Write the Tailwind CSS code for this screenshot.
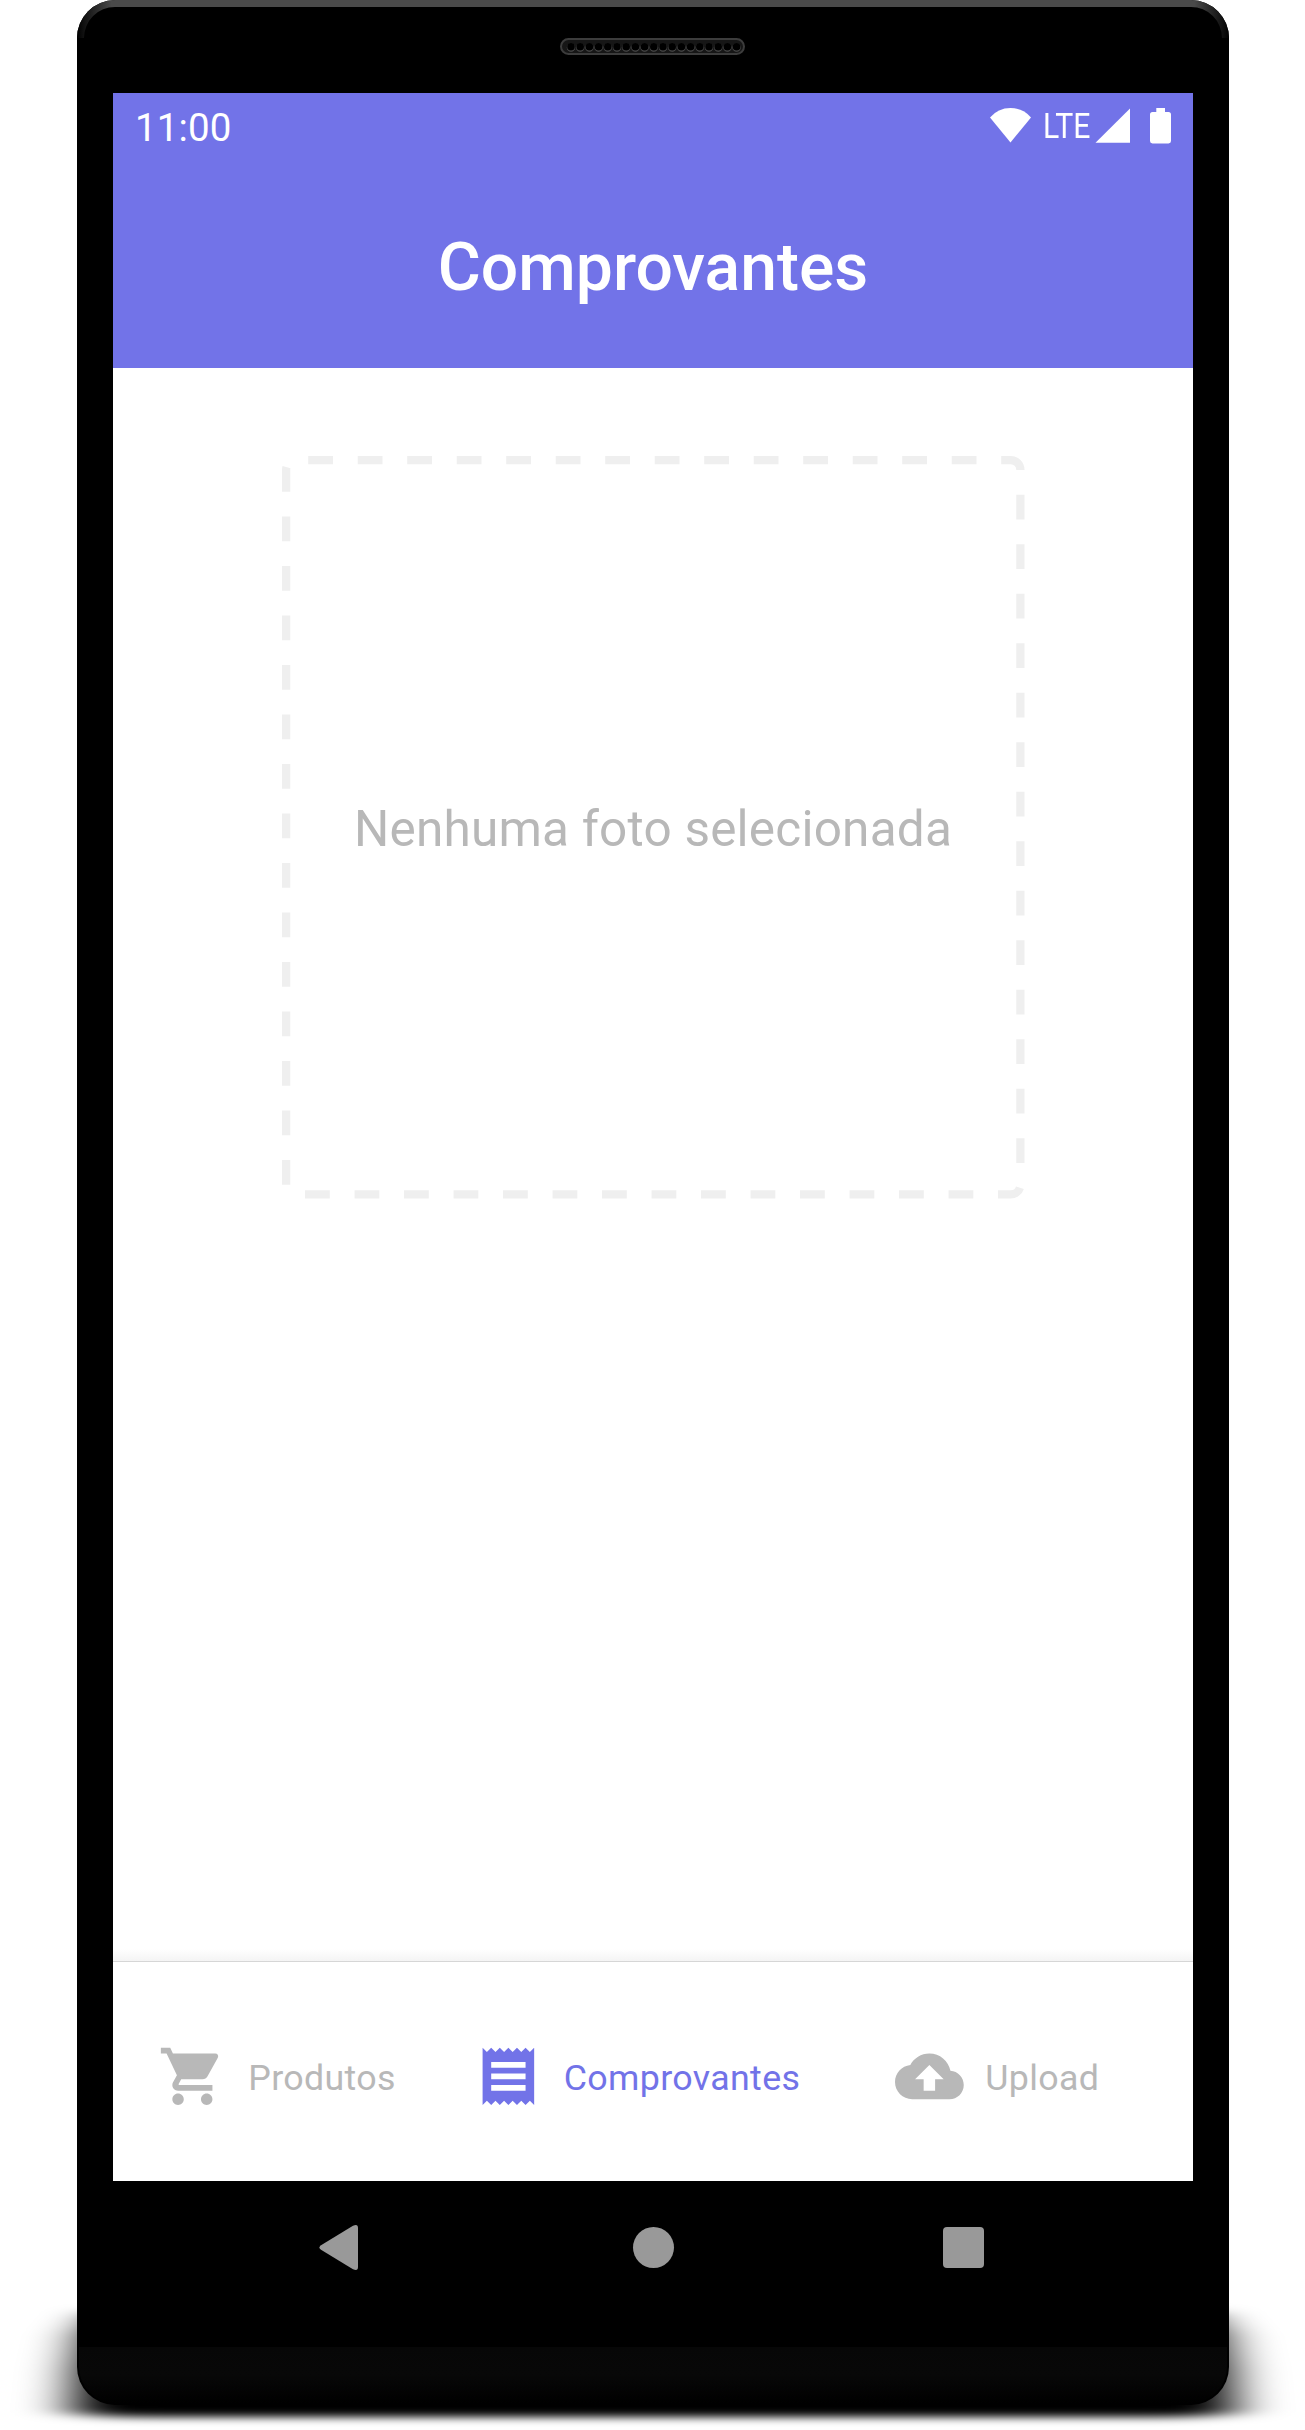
<!DOCTYPE html>
<html lang="pt-BR">
<head>
<meta charset="utf-8">
<title>Comprovantes</title>
<script src="https://cdn.jsdelivr.net/npm/@tailwindcss/browser@4"></script>
</head>
<body class="bg-white font-['Roboto',sans-serif]">
<div class="relative h-[2430px] w-[1305px] overflow-hidden pr-[76px] pl-[77px]">
  <!-- device frame -->
  <svg class="absolute inset-0" width="1305" height="2430" viewBox="0 0 1305 2430">
    <defs>
      <filter id="soft" x="-100" y="2200" width="1500" height="300" filterUnits="userSpaceOnUse"><feGaussianBlur stdDeviation="26 4.500"/></filter>
      <linearGradient id="edge" gradientUnits="userSpaceOnUse" x1="77" y1="0" x2="1229" y2="0">
        <stop offset="0" stop-color="#000"/><stop offset=".006" stop-color="#111"/><stop offset=".03" stop-color="#4a4a4a"/>
        <stop offset=".97" stop-color="#4a4a4a"/><stop offset=".994" stop-color="#111"/><stop offset="1" stop-color="#000"/>
      </linearGradient>
      <linearGradient id="base" x1="0" y1="0" x2="0" y2="1">
        <stop offset="0" stop-color="#070707"/><stop offset=".5" stop-color="#080808"/><stop offset="1" stop-color="#000"/>
      </linearGradient>
    </defs>
    <path filter="url(#soft)" d="M104 2312L84 2335L76 2370L72 2412Q72 2414 120 2417H1186Q1234 2414 1234 2412L1230 2370L1222 2335L1202 2312Z"/>
    <rect x="77" y="0" width="1152" height="2405" rx="38"/>
    <path fill="url(#edge)" d="M77 38A38 38 0 0 1 115 0H1191A38 38 0 0 1 1229 38H1222A31 31 0 0 0 1191 7H115A31 31 0 0 0 84 38Z"/>
    <path fill="url(#base)" d="M79 2347H1227V2367A36 36 0 0 1 1191 2403H115A36 36 0 0 1 79 2367Z"/>
    <rect x="561" y="39" width="183" height="15" rx="7.5" fill="#161616" stroke="#3c3c3c" stroke-width="2"/>
    <path d="M571 47.5H738" stroke="#4a4a4a" stroke-width="8.5" stroke-linecap="round" stroke-dasharray="0 9.2"/>
    <path d="M571 46.7H738" stroke="#000" stroke-width="7.6" stroke-linecap="round" stroke-dasharray="0 9.2"/>
  </svg>

  <div class="relative flex h-[2405px] flex-col px-9 pt-[93px]">
    <header class="h-[275px] bg-[#7273e8] text-white">
      <div class="flex h-[66px] items-center justify-between pr-[22px] pl-[22px]">
        <span class="pt-[5px] text-[38.5px] leading-none tracking-[.1px]">11:00</span>
        <div class="flex h-full items-center">
          <svg class="mr-[12px]" width="41" height="66" viewBox="990 93 41 66" fill="#fff"><path d="M990 117.5Q998 108 1010.500 108T1031 117.500L1010.500 142.500Z"/></svg>
          <span class="w-[52px] origin-left scale-x-[.87] text-[34.7px] leading-none">LTE</span>
          <svg width="76" height="66" viewBox="1095 93 76 66" fill="#fff"><path d="M1095.500 142.700H1130V108.500Z"/><path d="M1156.300 108H1165V112H1168.500Q1171 112 1171 114.500V141Q1171 143.400 1168.500 143.400H1152.500Q1150 143.400 1150 141V114.500Q1150 112 1152.500 112H1156.300Z"/></svg>
        </div>
      </div>
      <h1 class="flex h-[209px] items-center justify-center pt-2 text-[66px] leading-none font-medium">Comprovantes</h1>
    </header>

    <main class="flex h-[1593px] flex-col items-center bg-white pt-[88px]">
      <div class="relative flex h-[742.5px] w-[742.5px] items-center justify-center">
        <svg class="absolute inset-0" width="743" height="743" viewBox="282 456 743 743" fill="none" stroke="#efefef" stroke-width="8.25" stroke-dasharray="24.75">
          <path d="M286.125 1184.750V469.750A9.625 9.625 0 0 1 295.750 460.125H1010.750A9.625 9.625 0 0 1 1020.375 469.750V1184.750A9.625 9.625 0 0 1 1010.750 1194.375H295.750A9.625 9.625 0 0 1 286.125 1184.750"/>
        </svg>
        <p class="pt-[3px] text-[49.5px] tracking-[.21px] whitespace-nowrap text-[#b8b8b8]">Nenhuma foto selecionada</p>
      </div>
      <div class="mt-auto h-[12px] w-full bg-linear-to-b from-white to-[#f4f4f4]"></div>
    </main>

    <nav class="flex h-[220px] items-center border-t border-[#d6d6d6] bg-white pt-2.5 pl-[45px] text-[35.75px] tracking-[.35px] text-[#b8b8b8]">
      <a class="flex w-[315.500px] items-center">
        <svg width="68.750" height="68.750" viewBox="0 0 24 24" fill="currentColor"><path d="M7 18c-1.100 0-1.990.9-1.990 2S5.900 22 7 22s2-.9 2-2-.9-2-2-2zM1 2v2h2l3.600 7.590-1.350 2.450c-.16.28-.25.61-.25.960 0 1.100.9 2 2 2h12v-2H7.420c-.14 0-.25-.11-.25-.25l.03-.12.9-1.630h7.450c.75 0 1.410-.41 1.750-1.030l3.580-6.490A1 1 0 0 0 20 4H5.210l-.94-2H1zm16 16c-1.100 0-1.990.9-1.990 2s.89 2 1.990 2 2-.9 2-2-.9-2-2-2z"/></svg>
        <span class="ml-[21.5px] pt-1">Produtos</span>
      </a>
      <a class="flex w-[421.500px] items-center text-[#7273e8]">
        <svg width="68.750" height="68.750" viewBox="0 0 24 24" fill="currentColor"><path d="M18 17H6v-2h12v2zm0-4H6v-2h12v2zm0-4H6V7h12v2zM3 22l1.500-1.500L6 22l1.500-1.500L9 22l1.500-1.500L12 22l1.500-1.500L15 22l1.500-1.500L18 22l1.500-1.500L21 22V2l-1.500 1.500L18 2l-1.500 1.500L15 2l-1.500 1.500L12 2l-1.500 1.500L9 2 7.500 3.500 6 2 4.500 3.500 3 2v20z"/></svg>
        <span class="ml-[21.5px] pt-1">Comprovantes</span>
      </a>
      <a class="flex items-center">
        <svg width="68.750" height="68.750" viewBox="0 0 24 24" fill="currentColor"><path d="M19.350 10.040C18.670 6.590 15.640 4 12 4 9.110 4 6.600 5.640 5.350 8.040 2.340 8.360 0 10.910 0 14c0 3.310 2.690 6 6 6h13c2.760 0 5-2.240 5-5 0-2.640-2.050-4.780-4.650-4.960zM14 13v4h-4v-4H7l5-5 5 5h-3z"/></svg>
        <span class="ml-[21.5px] pt-1">Upload</span>
      </a>
    </nav>

    <div class="flex h-[132px] items-center justify-between pr-[209px] pl-[206px]">
      <svg width="39" height="45" viewBox="0 0 39 45" fill="#999"><path d="M2 20.200Q-1.200 22.500 2 24.800L34 44.200Q39 46.500 39 42V3Q39 -1.500 34 .8Z"/></svg>
      <div class="ml-[5px] size-[41px] rounded-full bg-[#999]"></div>
      <div class="size-[41px] rounded bg-[#999]"></div>
    </div>
  </div>
</div>
</body>
</html>
